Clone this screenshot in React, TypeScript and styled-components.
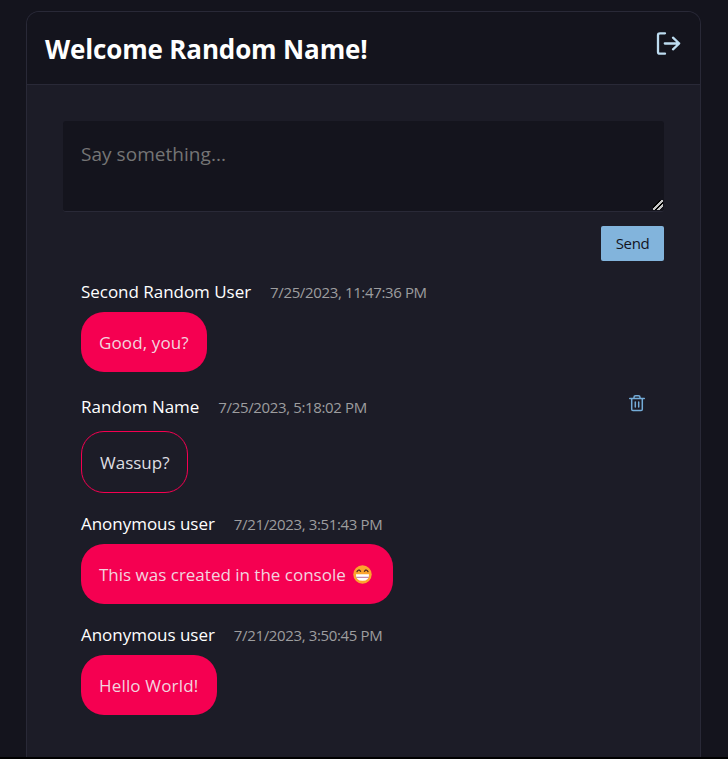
import React from "react";
import styled, { createGlobalStyle } from "styled-components";

const GlobalStyle = createGlobalStyle`
  *, *::before, *::after { box-sizing: border-box; }
  body {
    margin: 0;
    background: #14141d;
    font-family: "Open Sans", "Noto Sans", sans-serif;
    overflow: hidden;
  }
`;

const Page = styled.div`
  height: 759px;
  padding: 11px 27px 0 26px;
  border-bottom: 2px solid #000;
`;

const Card = styled.main`
  height: 100%;
  border: 1px solid #292937;
  border-bottom: 0;
  border-radius: 13px 13px 0 0;
  background: #1c1c27;
  overflow: hidden;
`;

const Header = styled.header`
  display: flex;
  justify-content: space-between;
  height: 73px;
  padding: 19px 19px 0 18px;
  background: #14141d;
  border-bottom: 1px solid #292937;
`;

const Title = styled.h1`
  margin: 0;
  color: #fff;
  font-size: 26px;
  line-height: 36px;
  font-weight: 700;
  letter-spacing: -0.15px;
  white-space: nowrap;
`;

const IconButton = styled.button`
  display: block;
  flex: none;
  height: max-content;
  padding: 0;
  border: 0;
  background: none;
  svg { display: block; }
`;

const Content = styled.div`
  padding: 36px;
`;

const Composer = styled.form`
  display: flex;
  flex-direction: column;
  align-items: flex-end;
  gap: 14px;
`;

const MessageInput = styled.textarea`
  display: block;
  width: 601px;
  height: 91px;
  padding: 18px;
  border: 0;
  border-bottom: 1px solid #292937;
  border-radius: 3px;
  outline: 0;
  background: #14141d;
  color: #fff;
  font: 19px/30px "Open Sans", sans-serif;
  letter-spacing: 0.04px;
  resize: both;
  &::placeholder { color: #757575; opacity: 1; }
  &::-webkit-resizer {
    background: linear-gradient(135deg,
      transparent 0 34%, #000 34% 43%, #c4c4c4 43% 56%, #000 56% 68%,
      #c4c4c4 68% 81%, transparent 81%) 4px 4px / 10px 10px no-repeat;
  }
`;

const SendButton = styled.button`
  width: 63px;
  height: 35px;
  padding: 0;
  border: 0;
  border-radius: 2px;
  background: #82b4dc;
  color: #14141d;
  font: 15px/35px "Open Sans", sans-serif;
  letter-spacing: -0.4px;
`;

const Messages = styled.ul`
  list-style: none;
  margin: 18px 0 0;
  padding: 0 18px;
`;

const Message = styled.li<{ $own?: boolean }>`
  height: ${(p) => (p.$own ? 121 : 111)}px;
  margin-top: ${(p) => (p.$own ? 4 : 0)}px;
  margin-bottom: ${(p) => (p.$own ? -4 : 0)}px;
`;

const Meta = styled.div<{ $own?: boolean }>`
  display: flex;
  align-items: flex-start;
  height: ${(p) => (p.$own ? 37 : 33)}px;
`;

const Author = styled.span`
  color: #fff;
  font-size: 17px;
  font-weight: 450;
  line-height: 25px;
  letter-spacing: -0.03px;
  white-space: nowrap;
`;

const Time = styled.time`
  flex: 1;
  margin-left: 19px;
  color: #9d9d9f;
  font-size: 15px;
  line-height: 26px;
  letter-spacing: -0.36px;
  white-space: nowrap;
`;

const Bubble = styled.p<{ $own?: boolean; $width: number; $spacing: number }>`
  width: ${(p) => p.$width}px;
  height: ${(p) => (p.$own ? 62 : 60)}px;
  margin: 0;
  padding: 17px 0 0 18px;
  border: ${(p) => (p.$own ? "1px solid #f50051" : "0")};
  border-radius: 23px;
  background: ${(p) => (p.$own ? "transparent" : "#f50051")};
  color: ${(p) => (p.$own ? "#dedee2" : "#f3d4df")};
  font-size: 17px;
  line-height: 27px;
  letter-spacing: ${(p) => p.$spacing}px;
  white-space: nowrap;
`;

const Emoji = styled.svg`
  display: inline-block;
  margin-left: 7px;
  vertical-align: -3px;
`;

const SignOutIcon = () => (
  <svg width="26" height="26" viewBox="0 0 26 26" fill="none" stroke="#bddcf0" strokeWidth="2.3" strokeLinecap="round" strokeLinejoin="round">
    <path d="M10 2.3H5Q3 2.3 3 4V21Q3 22.7 5 22.7H10" />
    <path d="M9.8 12.5H24.2M18 6.7L24.2 12.5L18 18.3" />
  </svg>
);

const TrashIcon = () => (
  <svg width="18" height="18" viewBox="0 0 18 18" fill="none" stroke="#74acd8" strokeWidth="1.5" strokeLinecap="round" strokeLinejoin="round">
    <path d="M1.7 4.6H16.3M6 4.4V3.3Q6 1.7 7.6 1.7H10.4Q12 1.7 12 3.3V4.4M3.7 4.8V15.2Q3.7 16.5 5 16.5H13Q14.3 16.5 14.3 15.2V4.8" />
    <path d="M7.3 8V13M10.7 8V13" />
  </svg>
);

const BeamingFace = () => (
  <Emoji width="19" height="19" viewBox="0 0 19 19" role="img" aria-label="😁">
    <circle cx="9.5" cy="9.5" r="9.2" fill="#fca52d" />
    <path d="M4 6.6Q5.7 3.6 7.6 6.3M11.4 6.3Q13.3 3.6 15 6.6" fill="none" stroke="#553021" strokeWidth="1.3" strokeLinecap="round" />
    <path d="M3 9.2H16Q16.4 15.8 9.5 15.8T3 9.2Z" fill="#fff" />
    <path d="M3.3 12.3H15.7" stroke="#b56d9a" strokeWidth="1" />
  </Emoji>
);

type ChatMessage = {
  author: string;
  time: string;
  text: string;
  width: number;
  spacing: number;
  own?: boolean;
  emoji?: boolean;
};

const messages: ChatMessage[] = [
  { author: "Second Random User", time: "7/25/2023, 11:47:36 PM", text: "Good, you?", width: 126, spacing: 0.12 },
  { author: "Random Name", time: "7/25/2023, 5:18:02 PM", text: "Wassup?", width: 107, spacing: 0, own: true },
  { author: "Anonymous user", time: "7/21/2023, 3:51:43 PM", text: "This was created in the console", width: 312, spacing: 0, emoji: true },
  { author: "Anonymous user", time: "7/21/2023, 3:50:45 PM", text: "Hello World!", width: 136, spacing: 0.17 },
];

export default function App() {
  return (
    <>
      <GlobalStyle />
      <Page>
        <Card>
          <Header>
            <Title>Welcome Random Name!</Title>
            <IconButton aria-label="Sign out"><SignOutIcon /></IconButton>
          </Header>
          <Content>
            <Composer>
              <MessageInput placeholder="Say something..." />
              <SendButton type="button">Send</SendButton>
            </Composer>
            <Messages>
              {messages.map((m) => (
                <Message key={m.time} $own={m.own}>
                  <Meta $own={m.own}>
                    <Author>{m.author}</Author>
                    <Time>{m.time}</Time>
                    {m.own && <IconButton aria-label="Delete"><TrashIcon /></IconButton>}
                  </Meta>
                  <Bubble $own={m.own} $width={m.width} $spacing={m.spacing}>
                    {m.text}
                    {m.emoji && <BeamingFace />}
                  </Bubble>
                </Message>
              ))}
            </Messages>
          </Content>
        </Card>
      </Page>
    </>
  );
}
